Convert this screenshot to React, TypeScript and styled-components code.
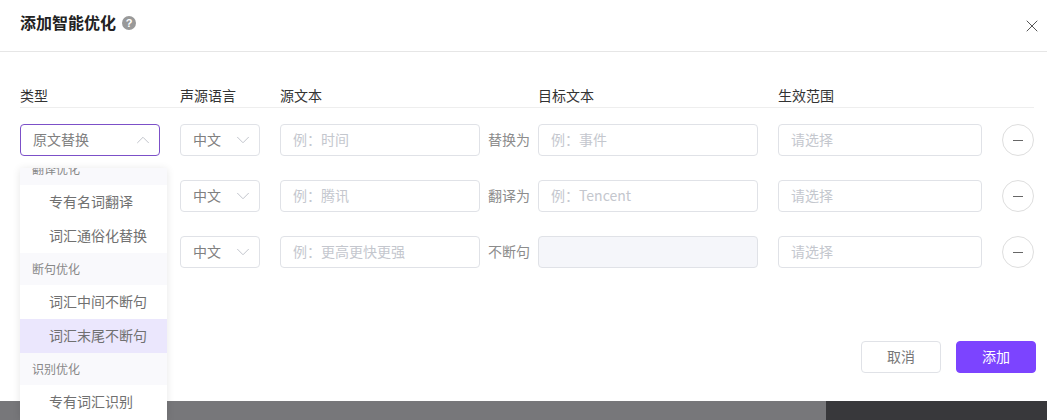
import React from 'react';
import styled, { createGlobalStyle } from 'styled-components';
import { ChevronDown, ChevronUp, X } from 'lucide-react';

const GlobalStyle = createGlobalStyle`
  html, body {
    margin: 0;
    padding: 0;
    background: #fff;
    overflow: hidden;
  }
  body {
    font-family: "Noto Sans CJK SC", "Liberation Sans", sans-serif;
    font-size: 14px;
    color: #333;
  }
`;

const Page = styled.div`
  width: 1047px;
  height: 420px;
  display: flex;
  flex-direction: column;
  overflow: hidden;
  position: relative;
`;

const Modal = styled.div`
  height: 401px;
  flex: none;
  display: flex;
  flex-direction: column;
  background: #fff;
`;

const Header = styled.header`
  height: 51px;
  flex: none;
  border-bottom: 1px solid #e6e6e6;
  padding: 0 5px 0 20px;
  display: flex;
  align-items: center;
`;

const Title = styled.h2`
  margin: -7px 6px 0 0;
  font-size: 16px;
  line-height: 24px;
  font-weight: 700;
  color: #222;
`;

const HelpIcon = styled.span`
  width: 14px;
  height: 14px;
  margin-top: -6px;
  border-radius: 50%;
  background: #999;
  color: #fff;
  font-size: 11px;
  font-weight: 700;
  line-height: 14px;
  text-align: center;
  font-family: "Liberation Sans", sans-serif;
`;

const CloseButton = styled.button`
  margin: 0 0 0 auto;
  padding: 0;
  width: 20px;
  height: 20px;
  border: 0;
  background: none;
  color: #333;
  display: flex;
  align-items: center;
  justify-content: center;
`;

const Body = styled.div`
  padding: 31px 13px 0 20px;
  flex: 1;
`;

const columns = '160px 100px 200px 58px 240px 224px 32px';

const HeadRow = styled.div`
  display: grid;
  grid-template-columns: ${columns};
  height: 24px;
  line-height: 24px;
  border-bottom: 1px solid #eee;
  color: #333;
`;

const FormRow = styled.div`
  display: grid;
  grid-template-columns: ${columns};
  align-items: center;
  height: 32px;
  margin-top: 24px;

  &:nth-child(2) {
    margin-top: 16px;
  }
`;

const Field = styled.div<{ $width: number; $active?: boolean; $disabled?: boolean }>`
  box-sizing: border-box;
  width: ${({ $width }) => $width}px;
  height: 32px;
  padding: 0 12px 2px;
  display: flex;
  align-items: center;
  justify-content: space-between;
  border: 1px solid ${({ $active }) => ($active ? '#7c50c8' : '#e0e2e7')};
  border-radius: 4px;
  background: ${({ $disabled }) => ($disabled ? '#f5f6fa' : '#fff')};
  color: #808080;
  line-height: 28px;
  white-space: nowrap;
`;

const Placeholder = styled.span`
  color: #c4c7ce;
`;

const JoinLabel = styled.span`
  padding: 0 0 3px 8px;
  color: #8c8c8c;
  white-space: nowrap;
`;

const Arrow = styled.span`
  display: flex;
  margin: 2px -7px 0 0;
  color: #bcc0c7;
`;

const RemoveButton = styled.button`
  box-sizing: border-box;
  width: 32px;
  height: 32px;
  padding: 0;
  border: 1px solid #dedede;
  border-radius: 50%;
  background: #fff;
  display: flex;
  align-items: center;
  justify-content: center;

  &::before {
    content: '';
    width: 10px;
    height: 1px;
    background: #666;
  }
`;

const Footer = styled.footer`
  flex: none;
  display: flex;
  justify-content: flex-end;
  gap: 15px;
  padding: 0 11px 28px 0;
`;

const FooterButton = styled.button<{ $primary?: boolean }>`
  box-sizing: border-box;
  width: 80px;
  height: 32px;
  padding: 0 0 2px;
  border-radius: 4px;
  border: 1px solid ${({ $primary }) => ($primary ? '#7c44ff' : '#e0e2e7')};
  background: ${({ $primary }) => ($primary ? '#7c44ff' : '#fff')};
  color: ${({ $primary }) => ($primary ? '#fff' : '#777')};
  font: inherit;
`;

const Backdrop = styled.div`
  flex: 1;
  display: flex;
`;

const BackdropPanel = styled.div<{ $width?: number; $color: string }>`
  flex: ${({ $width }) => ($width ? `0 0 ${$width}px` : '1')};
  background: ${({ $color }) => $color};
`;

const Dropdown = styled.div`
  position: absolute;
  left: 20px;
  top: 168px;
  width: 147px;
  height: 252px;
  overflow: hidden;
  background: #fff;
  box-shadow: 0 1px 8px rgba(0, 0, 0, 0.1);
`;

const DropdownList = styled.div`
  margin-top: -15px;
`;

const GroupLabel = styled.div`
  height: 32px;
  padding-left: 12px;
  background: #f9f9fc;
  color: #888;
  font-size: 12px;
  line-height: 32px;
`;

const Option = styled.div<{ $selected?: boolean }>`
  height: 34px;
  padding-left: 29px;
  line-height: 32px;
  color: #707070;
  white-space: nowrap;
  background: ${({ $selected }) => ($selected ? '#ebe7fd' : 'transparent')};
`;

type RowData = {
  source: string;
  join: string;
  target?: string;
};

const rows: RowData[] = [
  { source: '例：时间', join: '替换为', target: '例：事件' },
  { source: '例：腾讯', join: '翻译为', target: '例：Tencent' },
  { source: '例：更高更快更强', join: '不断句' },
];

const App = () => (
  <Page>
    <GlobalStyle />
    <Modal>
      <Header>
        <Title>添加智能优化</Title>
        <HelpIcon>?</HelpIcon>
        <CloseButton aria-label="关闭">
          <X size={20} strokeWidth={1} />
        </CloseButton>
      </Header>
      <Body>
        <HeadRow>
          <span>类型</span>
          <span>声源语言</span>
          <span>源文本</span>
          <span />
          <span>目标文本</span>
          <span>生效范围</span>
        </HeadRow>
        {rows.map((row, index) => (
          <FormRow key={row.join}>
            {index === 0 ? (
              <Field $width={140} $active>
                <span>原文替换</span>
                <Arrow>
                  <ChevronUp size={22} strokeWidth={1} />
                </Arrow>
              </Field>
            ) : (
              <span />
            )}
            <Field $width={80}>
              <span>中文</span>
              <Arrow>
                <ChevronDown size={22} strokeWidth={1} />
              </Arrow>
            </Field>
            <Field $width={200}>
              <Placeholder>{row.source}</Placeholder>
            </Field>
            <JoinLabel>{row.join}</JoinLabel>
            <Field $width={220} $disabled={!row.target}>
              {row.target && <Placeholder>{row.target}</Placeholder>}
            </Field>
            <Field $width={204}>
              <Placeholder>请选择</Placeholder>
            </Field>
            <RemoveButton aria-label="删除" />
          </FormRow>
        ))}
      </Body>
      <Footer>
        <FooterButton>取消</FooterButton>
        <FooterButton $primary>添加</FooterButton>
      </Footer>
    </Modal>
    <Backdrop>
      <BackdropPanel $width={826} $color="#77777a" />
      <BackdropPanel $color="#38383b" />
    </Backdrop>
    <Dropdown>
      <DropdownList>
        <GroupLabel>翻译优化</GroupLabel>
        <Option>专有名词翻译</Option>
        <Option>词汇通俗化替换</Option>
        <GroupLabel>断句优化</GroupLabel>
        <Option>词汇中间不断句</Option>
        <Option $selected>词汇末尾不断句</Option>
        <GroupLabel>识别优化</GroupLabel>
        <Option>专有词汇识别</Option>
      </DropdownList>
    </Dropdown>
  </Page>
);

export default App;
